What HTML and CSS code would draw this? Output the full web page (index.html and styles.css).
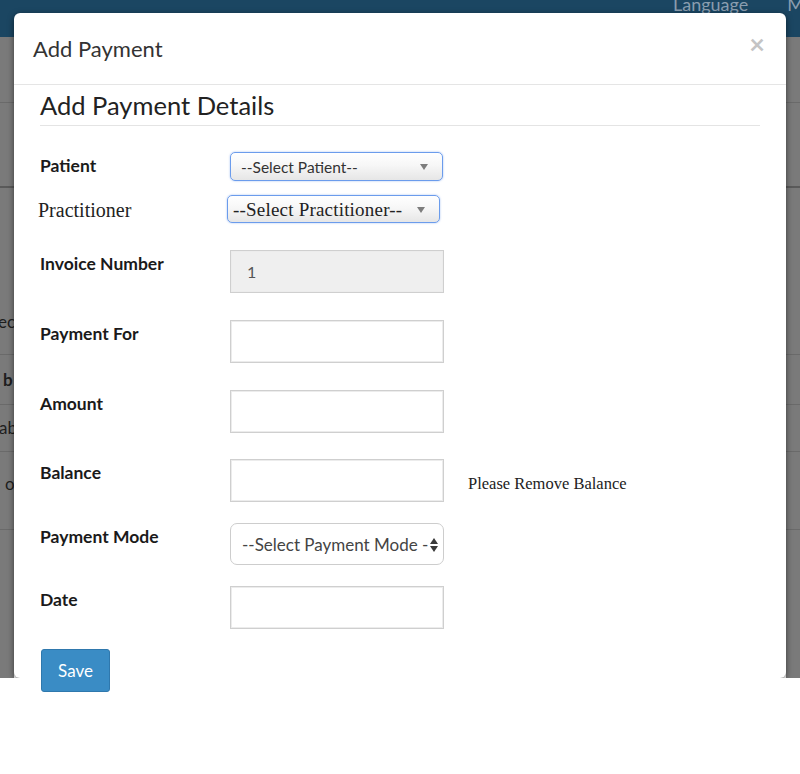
FILE: index.html
```html
<!DOCTYPE html>
<html>
<head>
<meta charset="utf-8">
<link rel="stylesheet" href="styles.css">
</head>
<body>
<div class="page">
  <div class="nav">
    <span class="nav-link">Language</span>
    <span class="nav-link nav-m">M</span>
  </div>
  <div class="bg-row bg-a"></div>
  <div class="bg-row bg-b"></div>
  <div class="bg-row bg-c"><span class="bg-text cut2">ec</span></div>
  <div class="bg-row bg-d"><span class="bg-text bold">b</span></div>
  <div class="bg-row bg-e"><span class="bg-text cut1">ab</span></div>
  <div class="bg-row bg-f"><span class="bg-text off5">o</span></div>
</div>

<div class="modal">
  <div class="modal-header">
    <h4 class="modal-title">Add Payment</h4>
    <span class="close">×</span>
  </div>
  <div class="modal-body">
    <h3 class="section-title">Add Payment Details</h3>
    <form class="form">
      <div class="row row-patient">
        <label class="label">Patient</label>
        <div class="sel-wrap">
          <select class="sel sel-patient"><option>--Select Patient--</option></select>
          <span class="caret caret-patient"></span>
        </div>
      </div>
      <div class="row row-pract">
        <label class="label label-serif">Practitioner</label>
        <div class="sel-wrap">
          <select class="sel sel-pract"><option>--Select Practitioner--</option></select>
          <span class="caret caret-pract"></span>
        </div>
      </div>
      <div class="row row-gap27">
        <label class="label">Invoice Number</label>
        <input class="input input-ro" type="text" value="1" readonly>
      </div>
      <div class="row row-gap27">
        <label class="label">Payment For</label>
        <input class="input" type="text">
      </div>
      <div class="row row-gap27">
        <label class="label">Amount</label>
        <input class="input" type="text">
      </div>
      <div class="row row-gap26">
        <label class="label">Balance</label>
        <input class="input" type="text">
        <span class="help">Please Remove Balance</span>
      </div>
      <div class="row row-gap21">
        <label class="label">Payment Mode</label>
        <div class="sel-wrap">
          <select class="mode-sel"><option>--Select Payment Mode --</option></select>
          <span class="updown"><span class="up"></span><span class="down"></span></span>
        </div>
      </div>
      <div class="row row-gap21">
        <label class="label">Date</label>
        <input class="input" type="text">
      </div>
      <div class="row row-gap20">
        <button class="btn" type="button">Save</button>
      </div>
    </form>
  </div>
</div>
</body>
</html>
```

FILE: styles.css
```css
html, body {
  margin: 0;
  background: #ffffff;
}
body {
  font-family: Lato, "Open Sans", sans-serif;
  color: #222;
  overflow: hidden;
}

/* dimmed page behind the modal */
.page {
  height: 678px;
  background: #7a7a7a;
  overflow: hidden;
}
.nav {
  height: 37px;
  background: #1b4662;
  display: flex;
  justify-content: flex-end;
  gap: 39px;
  overflow: hidden;
}
.nav-link {
  color: #8a9daf;
  font-size: 18px;
  line-height: 20px;
  margin-top: -6px;
}
.nav-m {
  margin-right: -4px;
}
.bg-row {
  box-sizing: border-box;
  border-bottom: 1px solid #6a6a6a;
  display: flex;
  align-items: center;
}
.bg-a { height: 66px; }
.bg-b { height: 85px; border-bottom: 2px solid #5a5a5a; }
.bg-c { height: 167px; align-items: flex-end; padding-bottom: 22px; }
.bg-d { height: 50px; }
.bg-e { height: 47px; }
.bg-f { height: 78px; align-items: flex-start; padding-top: 22px; }
.bg-text {
  font-size: 17px;
  line-height: 20px;
  color: #1e1e1e;
}
.bg-text.bold { font-weight: 700; margin-left: 3px; }
.cut2 { margin-left: -2px; }
.cut1 { margin-left: -1px; }
.off5 { margin-left: 5px; }

/* modal */
.modal {
  position: absolute;
  top: 13px;
  left: 14px;
  width: 772px;
  height: 761px;
  background: #ffffff;
  border-radius: 6px;
}
.modal::before {
  content: "";
  position: absolute;
  left: 0;
  top: 0;
  width: 100%;
  height: 665px;
  border-radius: 6px;
  box-shadow: 0 2px 6px rgba(0, 0, 0, 0.55);
  clip-path: inset(-12px -12px 0 -12px);
  pointer-events: none;
}
.modal-header {
  box-sizing: border-box;
  height: 72px;
  border-bottom: 1px solid #e5e5e5;
  padding: 0 21px 0 19px;
  display: flex;
  align-items: center;
  justify-content: space-between;
}
.modal-title {
  margin: 0;
  font-size: 22px;
  font-weight: 400;
  color: #333;
  line-height: 26px;
}
.close {
  font-size: 27px;
  font-weight: 700;
  color: #c4c4c4;
  line-height: 24px;
  margin-top: -9px;
}
.modal-body {
  padding: 4px 26px 0 26px;
}
.section-title {
  margin: 0;
  font-size: 25.5px;
  font-weight: 400;
  line-height: 32px;
  color: #222;
  padding-bottom: 4px;
  border-bottom: 1px solid #e4e4e4;
}

.form {
  margin-top: 26px;
}
.row {
  display: flex;
  align-items: flex-start;
}
.label {
  width: 190px;
  flex: none;
  font-size: 17.5px;
  font-weight: 700;
  line-height: 20px;
  padding-top: 4px;
  color: #1a1a1a;
}
.label-serif {
  font-family: "Liberation Serif", serif;
  font-weight: 400;
  font-size: 20px;
  margin-left: -2px;
  width: 189px;
  padding-top: 4px;
  line-height: 22px;
  color: #222;
}
.row-pract { margin-top: 14px; }
.row-gap27 { margin-top: 27px; }
.row-gap26 { margin-top: 26px; }
.row-gap21 { margin-top: 21px; }
.row-gap20 { margin-top: 20px; }

.sel-wrap {
  position: relative;
  flex: none;
}
.sel {
  -webkit-appearance: none;
  appearance: none;
  box-sizing: border-box;
  border: 1px solid #6b9cec;
  border-radius: 5px;
  background: linear-gradient(#ffffff 0%, #f7f7f7 45%, #e6e6e6 100%);
  box-shadow: 0 0 2px rgba(90, 140, 230, 0.6);
  color: #333;
  outline: none;
  margin: 0;
}
.sel-patient {
  width: 213px;
  height: 29px;
  padding: 0 24px 0 10px;
  font-family: Lato, "Open Sans", sans-serif;
  font-size: 15.5px;
}
.sel-pract {
  width: 213px;
  height: 28px;
  padding: 0 24px 0 5px;
  font-family: "Liberation Serif", serif;
  font-size: 19px;
  letter-spacing: 0.2px;
  color: #222;
}
.caret {
  position: absolute;
  width: 0;
  height: 0;
  border-left: 4px solid transparent;
  border-right: 4px solid transparent;
  border-top: 6px solid #7d7d7d;
  pointer-events: none;
}
.caret-patient { right: 15px; top: 12px; }
.caret-pract { right: 15px; top: 12px; }

.input {
  box-sizing: border-box;
  width: 214px;
  height: 43px;
  border: 1px solid #cfcfcf;
  box-shadow: inset 0 0 0 1px #ececec;
  background: #fff;
  margin: 0;
  padding: 0 16px;
  font-family: Lato, "Open Sans", sans-serif;
  font-size: 16px;
  color: #555;
  outline: none;
  flex: none;
}
.input-ro {
  background: #efefef;
}
.help {
  font-family: "Liberation Serif", serif;
  font-size: 16.5px;
  line-height: 20px;
  color: #222;
  margin-left: 24px;
  padding-top: 15px;
}

.mode-sel {
  -webkit-appearance: none;
  appearance: none;
  box-sizing: border-box;
  width: 214px;
  height: 42px;
  border: 1px solid #cdcdcd;
  border-radius: 7px;
  background: #fff;
  margin: 0;
  padding: 0 12px 0 11px;
  font-family: Lato, "Open Sans", sans-serif;
  font-size: 17px;
  color: #444;
  outline: none;
}
.updown {
  position: absolute;
  right: 6px;
  top: 15px;
  display: flex;
  flex-direction: column;
  gap: 2px;
  pointer-events: none;
  background: #fff;
  padding-left: 2px;
}
.up {
  width: 0;
  height: 0;
  border-left: 4px solid transparent;
  border-right: 4px solid transparent;
  border-bottom: 6px solid #3a3a3a;
}
.down {
  width: 0;
  height: 0;
  border-left: 4px solid transparent;
  border-right: 4px solid transparent;
  border-top: 6px solid #3a3a3a;
}

.btn {
  margin: 0 0 0 1px;
  width: 69px;
  height: 43px;
  border: 1px solid #2f78ad;
  border-radius: 3px;
  background: #3a8cc5;
  color: #ffffff;
  font-family: Lato, "Open Sans", sans-serif;
  font-size: 17px;
  padding: 0;
}
```
